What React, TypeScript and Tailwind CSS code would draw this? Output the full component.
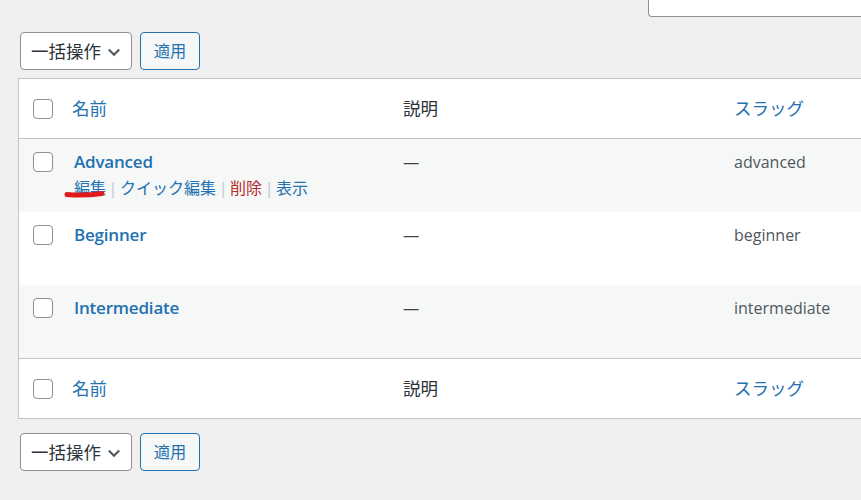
import React from 'react';

const font = { fontFamily: '"Open Sans", "Noto Sans CJK JP", sans-serif' };

interface Term {
  name: string;
  slug: string;
  striped: boolean;
  showActions: boolean;
}

const terms: Term[] = [
  { name: 'Advanced', slug: 'advanced', striped: true, showActions: true },
  { name: 'Beginner', slug: 'beginner', striped: false, showActions: false },
  { name: 'Intermediate', slug: 'intermediate', striped: true, showActions: false },
];

function Checkbox() {
  return <div className="w-[20px] h-[20px] rounded-[4px] border border-[#8c8f94] bg-white" />;
}

function BulkActions() {
  return (
    <div className="flex gap-[8px] ml-[2px]">
      <div className="w-[112px] h-[38px] flex items-center justify-between pl-[10px] pr-[9px] bg-white border border-[#8c8f94] rounded-[4px] text-[17.5px] text-[#2c3338]">
        <span>一括操作</span>
        <svg width="16" height="16" viewBox="0 0 20 20" className="mt-[1px]">
          <path d="M3.5 7l6.5 6.5 6.5-6.5" fill="none" stroke="#50575e" strokeWidth="2.6" />
        </svg>
      </div>
      <div className="w-[60px] h-[38px] flex items-center justify-center bg-[#f6f7f7] border border-[#2271b1] rounded-[4px] text-[16.25px] text-[#2271b1]">
        適用
      </div>
    </div>
  );
}

function HeaderRow({ border }: { border: 'top' | 'bottom' }) {
  return (
    <div
      className={`flex items-center h-[60px] bg-white ${
        border === 'top' ? 'border-b border-[#c3c4c7]' : 'border-t border-[#c3c4c7]'
      }`}
    >
      <div className="w-[53px] pl-[14px]">
        <Checkbox />
      </div>
      <div className="w-[331px] text-[17.5px] text-[#2271b1]">名前</div>
      <div className="w-[331px] text-[17.5px] text-[#2c3338]">説明</div>
      <div className="flex-1 text-[17.5px] text-[#2271b1]">スラッグ</div>
    </div>
  );
}

function Sep() {
  return <span className="inline-block w-[14px] text-center text-[#c3c4c7]">|</span>;
}

function TermRow({ term }: { term: Term }) {
  return (
    <div className={`flex items-start h-[73px] ${term.striped ? 'bg-[#f6f7f7]' : 'bg-white'}`}>
      <div className="w-[54px] pl-[14px] pt-[13px]">
        <Checkbox />
      </div>
      <div className="w-[330px] pl-[1px] pt-[10px] relative">
        <div className="h-[26px] leading-[26px] text-[17px] tracking-[-0.2px] font-semibold text-[#2271b1]">
          {term.name}
        </div>
        <div className={`h-[26px] leading-[26px] text-[16px] ${term.showActions ? '' : 'invisible'}`}>
          <span className="text-[#2271b1]">編集</span>
          <Sep />
          <span className="text-[#2271b1]">クイック編集</span>
          <Sep />
          <span className="text-[#b32d2e]">削除</span>
          <Sep />
          <span className="text-[#2271b1]">表示</span>
        </div>
        {term.showActions && (
          <svg className="absolute left-[-9px] top-[49px]" width="44" height="10" viewBox="0 0 44 10">
            <path d="M3 6.5 C 14 7.5, 27 7, 38 5.5" fill="none" stroke="#e01b1b" strokeWidth="5" strokeLinecap="round" />
          </svg>
        )}
      </div>
      <div className="w-[331px] pt-[10px] h-[26px] leading-[26px] text-[16.25px] text-[#3c434a] box-content">—</div>
      <div className="flex-1 pt-[10px] h-[26px] leading-[26px] text-[16px] text-[#50575e] box-content">
        {term.slug}
      </div>
    </div>
  );
}

export default function App() {
  return (
    <div className="w-[861px] h-[500px] overflow-hidden bg-[#f0f0f1] pl-[18px]" style={font}>
      <div className="ml-[630px] w-[260px] h-[17px] bg-white border border-t-0 border-[#8c8f94] rounded-b-[4px]" />
      <div className="mt-[15px]">
        <BulkActions />
      </div>
      <div className="mt-[8px] w-[900px] border border-[#c3c4c7] bg-white">
        <HeaderRow border="top" />
        {terms.map((t) => (
          <TermRow key={t.slug} term={t} />
        ))}
        <HeaderRow border="bottom" />
      </div>
      <div className="mt-[14px]">
        <BulkActions />
      </div>
    </div>
  );
}
